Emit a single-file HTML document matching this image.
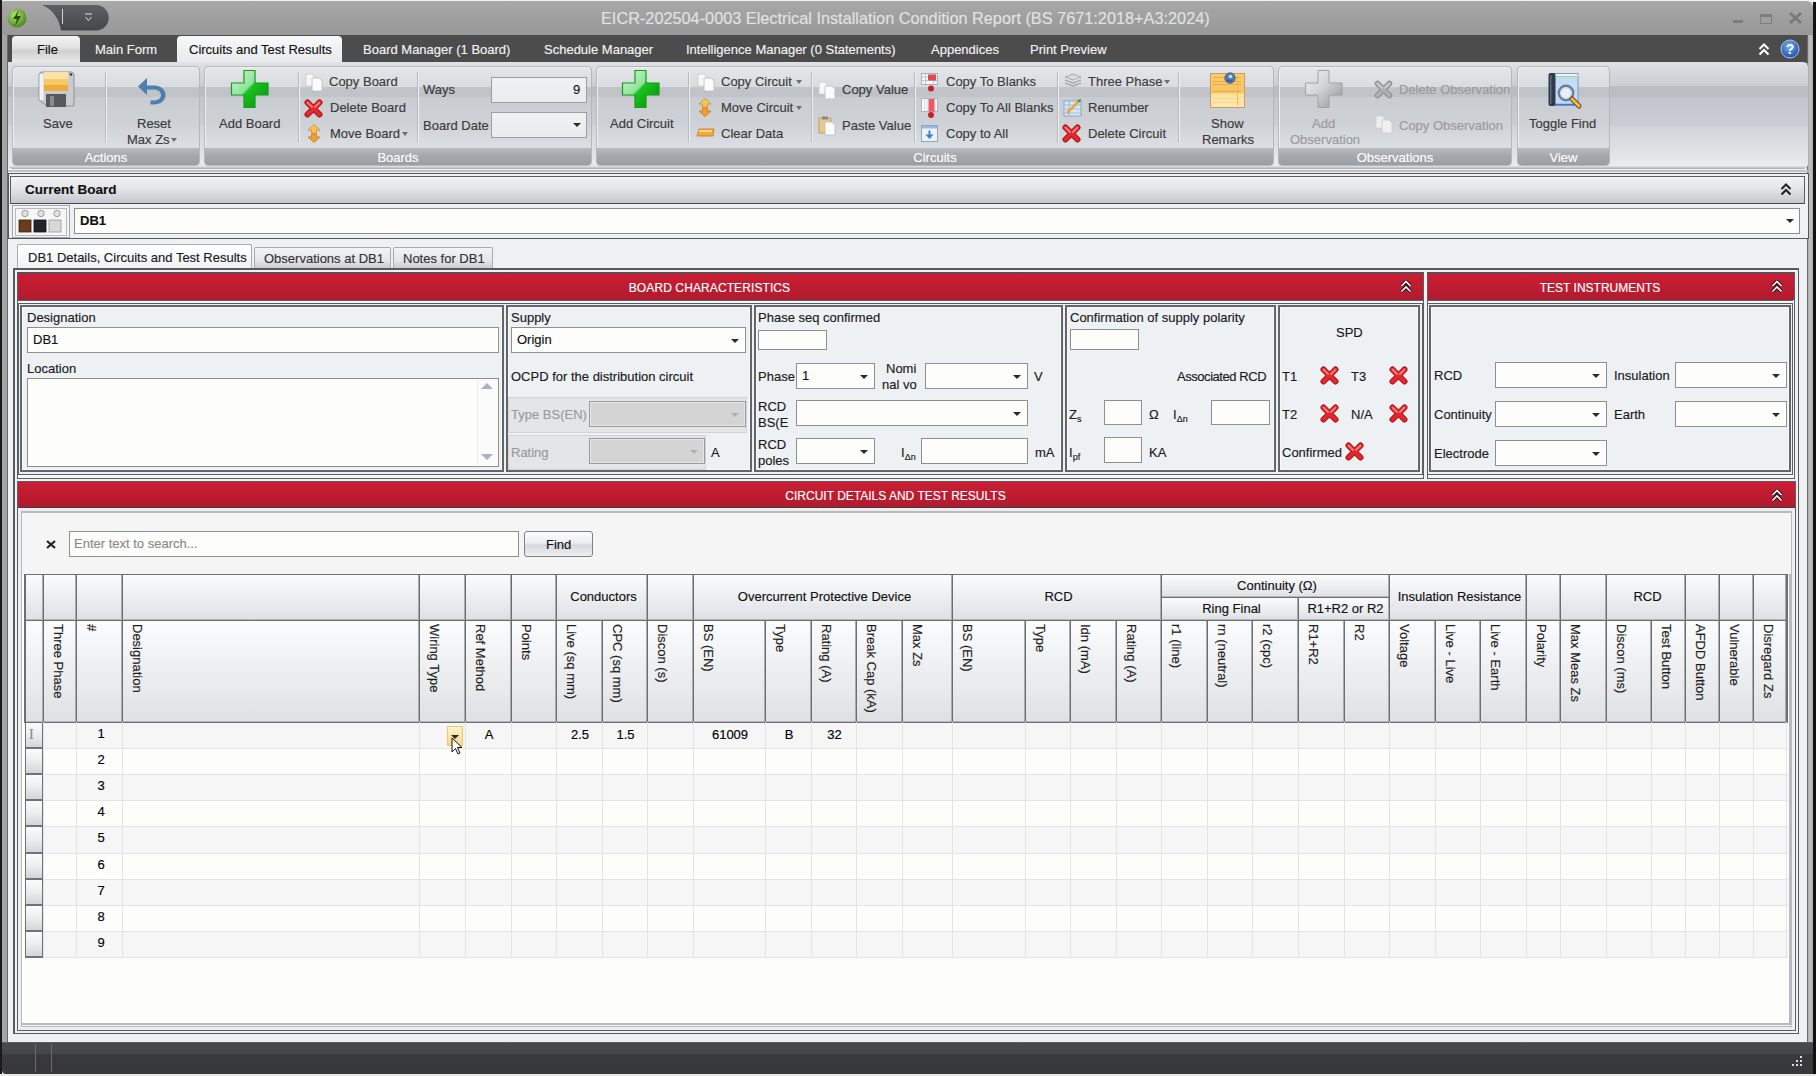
<!DOCTYPE html><html><head><meta charset="utf-8"><style>
*{box-sizing:border-box;margin:0;padding:0}
html,body{width:1816px;height:1076px;overflow:hidden;background:#f0f0f0}
body{font-family:"Liberation Sans",sans-serif;font-size:13px;color:#1e1e1e;position:relative;-webkit-text-stroke:0.15px currentColor}
.a{position:absolute}
.t{position:absolute;white-space:nowrap;line-height:15px}
.rt{color:#3a3a3a}
.glab{position:absolute;left:0;right:0;bottom:0;height:17px;background:linear-gradient(#b6b9bd,#a4a7ac 50%,#9b9ea3);color:#fff;text-align:center;line-height:19px;border-radius:0 0 3px 3px}
.grp{position:absolute;top:66px;height:100px;border:1px solid #b4b7bc;border-radius:4px;background:linear-gradient(#e4e6e9 0%,#d8dbdf 20%,#c0c3c8 21%,#bfc2c7 30%,#c9ccd1 31%,#ced1d6 58%,#dadde1 80%,#e0e3e6 100%);box-shadow:inset 1px 1px 0 #eef0f2}
.sep{position:absolute;width:2px;background:#b6b9be;border-right:1px solid #eef0f2}
.inp{position:absolute;background:#fdfdfc;border:1px solid #8e8f8f}
.dd{position:absolute;width:0;height:0;border-left:5px solid transparent;border-right:5px solid transparent;border-top:5px solid #2a2a2a}
.box{position:absolute;border:1px solid #7a7c7e;box-shadow:0 0 0 1px #eef1f4,0 0 0 2px #8e9092}
.redh{position:absolute;height:26px;background:linear-gradient(#cc1d33,#b01b2e);color:#fff;text-align:center;line-height:26px;font-size:13px;padding-right:22px;padding-top:1px}
.vh{position:absolute;writing-mode:vertical-rl;white-space:nowrap;line-height:15px;color:#1e1e1e}
.hc{position:absolute;background:linear-gradient(#fafafa 0%,#eceef0 40%,#dcdee1 100%);border-right:1px solid #7e8083;border-bottom:1px solid #7e8083}
</style></head><body><div class="a" style="left:0;top:0;width:1816px;height:1076px;background:#eef0f2"></div>
<div class="a" style="left:0;top:0;width:1816px;height:2px;background:#f2f2f2"></div>
<div class="a" style="left:0;top:1px;width:1813px;height:35px;background:linear-gradient(#a9a9a9,#9f9f9f 50%,#989898);border-radius:4px 6px 0 0"></div>
<div class="a" style="left:0;top:0;width:2px;height:1076px;background:#1a1a1a"></div>
<div class="a" style="left:1813px;top:2px;width:3px;height:1074px;background:#111"></div>
<div class="t" style="left:601px;top:9px;font-size:16.3px;line-height:18px;color:#e2e2e2;letter-spacing:0">EICR-202504-0003 Electrical Installation Condition Report (BS 7671:2018+A3:2024)</div>
<svg class="a" style="left:6px;top:7px" width="22" height="22" viewBox="0 0 22 22"><defs><radialGradient id="ga" cx="40%" cy="35%" r="65%"><stop offset="0" stop-color="#b8e07a"/><stop offset="1" stop-color="#4c8a1e"/></radialGradient></defs><circle cx="11" cy="11" r="9.5" fill="url(#ga)"/><path d="M13 3L7 12H11L9 19L15 9H11Z" fill="#1f4a10"/></svg>
<svg class="a" style="left:40px;top:4px" width="72" height="28"><defs><linearGradient id="gqa" x1="0" y1="0" x2="0" y2="1"><stop offset="0" stop-color="#5e6064"/><stop offset="1" stop-color="#44464a"/></linearGradient></defs><path d="M2 1H56A12.7 12.7 0 0 1 56 26.5H21C19 14 12 5 2 1Z" fill="url(#gqa)"/></svg>
<div class="a" style="left:62px;top:9px;width:1px;height:15px;background:#cfcfcf"></div>
<svg class="a" style="left:84px;top:13px" width="9" height="10"><path d="M1 1H8" stroke="#ddd" stroke-width="1"/><path d="M1.5 4L4.5 7.5L7.5 4" stroke="#ddd" fill="none" stroke-width="1"/></svg>
<div class="a" style="left:1733px;top:20px;width:10px;height:3px;background:#7d7d7d"></div>
<div class="a" style="left:1760px;top:14px;width:12px;height:10px;border:1px solid #7d7d7d;border-top:3px solid #7d7d7d"></div>
<svg class="a" style="left:1788px;top:11px" width="15" height="14"><path d="M2 2L13 12M13 2L2 12" stroke="#7a7a7a" stroke-width="3"/></svg>
<div class="a" style="left:2px;top:35px;width:1807px;height:28px;background:#4c4c4d"></div>
<div class="a" style="left:1807px;top:35px;width:6px;height:1008px;background:linear-gradient(90deg,#6a6a6a 0,#6a6a6a 1px,#a8a8a8 1px,#c4c4c4 50%,#a8a8a8)"></div>
<div class="a" style="left:2px;top:35px;width:6px;height:1010px;background:#a4a4a4"></div>
<div class="a" style="left:7px;top:35px;width:1px;height:1008px;background:#6a6a6a"></div>
<div class="a" style="left:12px;top:36px;width:68px;height:27px;border-radius:4px 4px 0 0;background:linear-gradient(#f4f4f4,#e0e0e0 45%,#cfcfcf 55%,#ececec)"></div>
<div class="t" style="left:37px;top:42px;color:#111">File</div>
<div class="t" style="left:95px;top:42px;color:#f2f2f2">Main Form</div>
<div class="a" style="left:177px;top:36px;width:165px;height:28px;border-radius:4px 4px 0 0;background:linear-gradient(#f7f8f9,#e6e8eb)"></div>
<div class="t" style="left:189px;top:42px;color:#111">Circuits and Test Results</div>
<div class="t" style="left:363px;top:42px;color:#f2f2f2">Board Manager (1 Board)</div>
<div class="t" style="left:544px;top:42px;color:#f2f2f2">Schedule Manager</div>
<div class="t" style="left:686px;top:42px;color:#f2f2f2">Intelligence Manager (0 Statements)</div>
<div class="t" style="left:931px;top:42px;color:#f2f2f2">Appendices</div>
<div class="t" style="left:1030px;top:42px;color:#f2f2f2">Print Preview</div>
<svg class="a" style="left:1758px;top:43px" width="12" height="13" viewBox="0 0 12 13"><path d="M1.5 6L6 1.5L10.5 6M1.5 11.5L6 7L10.5 11.5" stroke="#fff" stroke-width="2" fill="none"/></svg>
<svg class="a" style="left:1780px;top:39px" width="20" height="20" viewBox="0 0 20 20"><defs><radialGradient id="gh" cx="45%" cy="35%" r="60%"><stop offset="0" stop-color="#7fb4f0"/><stop offset="1" stop-color="#1d56b8"/></radialGradient></defs><circle cx="10" cy="10" r="9" fill="url(#gh)" stroke="#b9c6d6" stroke-width="1"/><text x="10" y="15" font-family="Liberation Sans" font-weight="bold" font-size="14" fill="#fff" text-anchor="middle">?</text></svg>
<div class="a" style="left:8px;top:62px;width:1800px;height:107px;border-radius:0 5px 5px 5px;background:linear-gradient(#e0e2e5 0%,#d9dce0 5%,#cacdd3 22%,#babdc2 23%,#b9bcc1 32%,#c2c5cb 33%,#cacdd3 58%,#d1d4d9 61%,#e9ebed 97%,#a5a7aa 100%)"></div>
<div class="a" style="left:8px;top:170px;width:1800px;height:2px;background:#bfc1c4"></div>
<div class="grp" style="left:12px;width:188px"><div class="glab">Actions</div></div>
<div class="grp" style="left:204px;width:388px"><div class="glab">Boards</div></div>
<div class="grp" style="left:596px;width:678px"><div class="glab">Circuits</div></div>
<div class="grp" style="left:1278px;width:234px"><div class="glab">Observations</div></div>
<div class="grp" style="left:1517px;width:93px"><div class="glab">View</div></div>
<svg class="a" style="left:38px;top:71px" width="37" height="37" viewBox="0 0 37 37"><path d="M3 1H34L36 3V35H9L1 29V3Z" fill="#c9cbce" stroke="#8f9195" stroke-width="1"/><rect x="1.5" y="3" width="4" height="26" fill="#f2f2f2"/><rect x="6" y="1" width="24" height="7" fill="#fbe3a3"/><rect x="6" y="8" width="24" height="6" fill="#f6c96c"/><rect x="6" y="14" width="24" height="6" fill="#efab3a"/><circle cx="33" cy="3.5" r="1.3" fill="#333"/><rect x="8" y="23" width="20" height="13" fill="#58595c"/><rect x="12" y="25" width="4" height="10" fill="#8a8b8e"/></svg>
<div class="t rt" style="left:43px;top:116px">Save</div>
<div class="sep" style="left:105px;top:72px;height:70px"></div>
<svg class="a" style="left:136px;top:76px" width="34" height="30" viewBox="0 0 34 30"><path d="M11 2L2 10.5L11 19V13.5H18C22 13.5 25 15.8 25 19C25 22.2 22 24.5 18 24.5H14.5V28.5H18C24.5 28.5 29.5 24.5 29.5 19C29.5 13.5 24.5 9.5 18 9.5H11Z" fill="#4d7fae"/></svg>
<div class="t rt" style="left:137px;top:116px">Reset</div>
<div class="t rt" style="left:127px;top:132px">Max Zs</div>
<div class="dd" style="left:171px;top:138px;border-width:4px 3px 0 3px;border-top-color:#6e6e6e"></div>
<svg class="a" style="left:230px;top:69px" width="40" height="40" viewBox="0 0 40 40"><defs><linearGradient id="gp230" x1="0" y1="0" x2="1" y2="1"><stop offset="0" stop-color="#d6f5dc"/><stop offset="0.45" stop-color="#8fe39a"/><stop offset="0.5" stop-color="#19c21f"/><stop offset="1" stop-color="#0a8c10"/></linearGradient></defs><path d="M14 1.5H25V14H38V26H25V38.5H14V26H1.5V14H14Z" fill="url(#gp230)" stroke="#10a015" stroke-width="1.2"/></svg>
<div class="t rt" style="left:219px;top:116px">Add Board</div>
<div class="sep" style="left:298px;top:72px;height:70px"></div>
<svg class="a" style="left:305px;top:73px" width="20" height="19" viewBox="0 0 20 19"><path d="M1 1H7L9 3V13H1Z" fill="#f7f7f7" stroke="#c9c9c9" stroke-width="0.8"/><path d="M7 5H14L17 8V18H7Z" fill="#fafafa" stroke="#bdbdbd" stroke-width="0.8"/></svg>
<div class="t rt" style="left:329px;top:74px">Copy Board</div>
<svg class="a" style="left:304px;top:99px" width="19" height="19" viewBox="0 0 19 19"><path d="M3.5 3.5L15.5 15.5M15.5 3.5L3.5 15.5" stroke="#a80e12" stroke-width="6" stroke-linecap="round"/><path d="M3.5 3.5L15.5 15.5M15.5 3.5L3.5 15.5" stroke="#e5262c" stroke-width="4" stroke-linecap="round"/><path d="M3.5 3.5L8 8M15.5 3.5L11 8" stroke="#f47a7d" stroke-width="2" stroke-linecap="round"/></svg>
<div class="t rt" style="left:330px;top:100px">Delete Board</div>
<svg class="a" style="left:306px;top:124px" width="16" height="19" viewBox="0 0 16 19"><path d="M8 0.5L14 6H10.5V9H5.5V6H2Z" fill="#f7c35a" stroke="#d98e1c" stroke-width="0.8"/><path d="M8 18.5L14 13H10.5V10H5.5V13H2Z" fill="#f0a030" stroke="#d07a10" stroke-width="0.8"/></svg>
<div class="t rt" style="left:330px;top:126px">Move Board</div>
<div class="dd" style="left:402px;top:132px;border-width:4px 3px 0 3px;border-top-color:#6e6e6e"></div>
<div class="sep" style="left:417px;top:72px;height:70px"></div>
<div class="t rt" style="left:423px;top:82px">Ways</div>
<div class="inp" style="left:491px;top:77px;width:96px;height:26px;background:linear-gradient(#f0f1f3,#e9ebee);border-color:#9c9ea1"></div>
<div class="t" style="left:573px;top:82px;color:#111">9</div>
<div class="t rt" style="left:423px;top:118px">Board Date</div>
<div class="inp" style="left:491px;top:112px;width:96px;height:26px;background:linear-gradient(#f0f1f3,#e9ebee);border-color:#9c9ea1"></div>
<div class="dd" style="left:573px;top:123px;border-width:4px 4px 0 4px"></div>
<svg class="a" style="left:621px;top:69px" width="40" height="40" viewBox="0 0 40 40"><defs><linearGradient id="gp621" x1="0" y1="0" x2="1" y2="1"><stop offset="0" stop-color="#d6f5dc"/><stop offset="0.45" stop-color="#8fe39a"/><stop offset="0.5" stop-color="#19c21f"/><stop offset="1" stop-color="#0a8c10"/></linearGradient></defs><path d="M14 1.5H25V14H38V26H25V38.5H14V26H1.5V14H14Z" fill="url(#gp621)" stroke="#10a015" stroke-width="1.2"/></svg>
<div class="t rt" style="left:610px;top:116px">Add Circuit</div>
<div class="sep" style="left:688px;top:72px;height:70px"></div>
<svg class="a" style="left:697px;top:73px" width="20" height="19" viewBox="0 0 20 19"><path d="M1 1H7L9 3V13H1Z" fill="#f7f7f7" stroke="#c9c9c9" stroke-width="0.8"/><path d="M7 5H14L17 8V18H7Z" fill="#fafafa" stroke="#bdbdbd" stroke-width="0.8"/></svg>
<div class="t rt" style="left:721px;top:74px">Copy Circuit</div>
<div class="dd" style="left:796px;top:80px;border-width:4px 3px 0 3px;border-top-color:#6e6e6e"></div>
<svg class="a" style="left:697px;top:98px" width="16" height="19" viewBox="0 0 16 19"><path d="M8 0.5L14 6H10.5V9H5.5V6H2Z" fill="#f7c35a" stroke="#d98e1c" stroke-width="0.8"/><path d="M8 18.5L14 13H10.5V10H5.5V13H2Z" fill="#f0a030" stroke="#d07a10" stroke-width="0.8"/></svg>
<div class="t rt" style="left:721px;top:100px">Move Circuit</div>
<div class="dd" style="left:796px;top:106px;border-width:4px 3px 0 3px;border-top-color:#6e6e6e"></div>
<svg class="a" style="left:696px;top:128px" width="20" height="10" viewBox="0 0 20 10"><path d="M3 1H18L17 8H1Z" fill="#f2a83a" stroke="#c97a12" stroke-width="0.8"/><rect x="3" y="2" width="13" height="2" fill="#fbd58a"/></svg>
<div class="t rt" style="left:721px;top:126px">Clear Data</div>
<div class="sep" style="left:811px;top:72px;height:70px"></div>
<svg class="a" style="left:818px;top:81px" width="20" height="19" viewBox="0 0 20 19"><path d="M1 1H7L9 3V13H1Z" fill="#f7f7f7" stroke="#c9c9c9" stroke-width="0.8"/><path d="M7 5H14L17 8V18H7Z" fill="#fafafa" stroke="#bdbdbd" stroke-width="0.8"/></svg>
<div class="t rt" style="left:842px;top:82px">Copy Value</div>
<svg class="a" style="left:818px;top:116px" width="20" height="20" viewBox="0 0 20 20"><rect x="1" y="2" width="12" height="15" fill="#e8c98a" stroke="#b8955a" stroke-width="0.8"/><rect x="4" y="0.5" width="6" height="3" fill="#8a8a8a"/><path d="M7 6H14L17 9V19H7Z" fill="#fafafa" stroke="#bdbdbd" stroke-width="0.8"/></svg>
<div class="t rt" style="left:842px;top:118px">Paste Value</div>
<div class="sep" style="left:914px;top:72px;height:70px"></div>
<svg class="a" style="left:920px;top:72px" width="20" height="22" viewBox="0 0 20 22"><rect x="1.5" y="1.5" width="16" height="11" fill="#f4f7fb" stroke="#9fb0c4" stroke-width="1"/><path d="M1.5 5H17.5M1.5 8.5H17.5M5.5 1.5V12.5M13.5 1.5V12.5" stroke="#b8c6d8" stroke-width="1"/><rect x="8" y="2.5" width="8" height="6" fill="#e0474c"/><circle cx="11" cy="16.5" r="3" fill="#c8202a"/></svg>
<div class="t rt" style="left:946px;top:74px">Copy To Blanks</div>
<svg class="a" style="left:920px;top:98px" width="20" height="22" viewBox="0 0 20 22"><rect x="1.5" y="0.5" width="16" height="13" fill="#fbfbfb" stroke="#a8b4c4" stroke-width="1"/><path d="M4.5 1V13M7 1V13M15 1V13" stroke="#d6dbe2" stroke-width="1"/><rect x="8.5" y="1" width="6" height="12.5" fill="#ec5a60"/><circle cx="11" cy="17" r="3" fill="#c8202a"/></svg>
<div class="t rt" style="left:946px;top:100px">Copy To All Blanks</div>
<svg class="a" style="left:920px;top:124px" width="20" height="20" viewBox="0 0 20 20"><rect x="1.5" y="1.5" width="16" height="16" fill="#eef3fa" stroke="#8ea6c4" stroke-width="1"/><rect x="2" y="2" width="15" height="2.5" fill="#9fb8d8"/><path d="M9.5 6.5V12" stroke="#3c7ed0" stroke-width="2"/><path d="M5.5 10.5L9.5 15L13.5 10.5Z" fill="#3c7ed0"/></svg>
<div class="t rt" style="left:946px;top:126px">Copy to All</div>
<div class="sep" style="left:1057px;top:72px;height:70px"></div>
<svg class="a" style="left:1063px;top:73px" width="20" height="16" viewBox="0 0 20 16"><path d="M10 1L18 4L10 7L2 4Z" fill="#d9dadc" stroke="#9c9ea1" stroke-width="0.8"/><path d="M2 7L10 10L18 7" fill="none" stroke="#9c9ea1" stroke-width="1.2"/><path d="M2 10L10 13L18 10" fill="none" stroke="#9c9ea1" stroke-width="1.2"/></svg>
<div class="t rt" style="left:1088px;top:74px">Three Phase</div>
<div class="dd" style="left:1164px;top:80px;border-width:4px 3px 0 3px;border-top-color:#6e6e6e"></div>
<svg class="a" style="left:1063px;top:98px" width="20" height="19" viewBox="0 0 20 19"><rect x="1" y="3" width="17" height="15" fill="#d8e8f7" stroke="#7d9cc0" stroke-width="0.8"/><path d="M1 7H18M1 11H18M1 15H18M6 3V18" stroke="#8fb0d4" stroke-width="0.8"/><path d="M4 15L16 3" stroke="#f2a43a" stroke-width="2.5"/><path d="M14 2L18 1L17 5Z" fill="#3aa03a"/></svg>
<div class="t rt" style="left:1088px;top:100px">Renumber</div>
<svg class="a" style="left:1062px;top:124px" width="19" height="19" viewBox="0 0 19 19"><path d="M3.5 3.5L15.5 15.5M15.5 3.5L3.5 15.5" stroke="#a80e12" stroke-width="6" stroke-linecap="round"/><path d="M3.5 3.5L15.5 15.5M15.5 3.5L3.5 15.5" stroke="#e5262c" stroke-width="4" stroke-linecap="round"/><path d="M3.5 3.5L8 8M15.5 3.5L11 8" stroke="#f47a7d" stroke-width="2" stroke-linecap="round"/></svg>
<div class="t rt" style="left:1088px;top:126px">Delete Circuit</div>
<div class="sep" style="left:1178px;top:72px;height:70px"></div>
<svg class="a" style="left:1209px;top:69px" width="40" height="40" viewBox="0 0 40 40"><defs><linearGradient id="grm" x1="0" y1="0" x2="0" y2="1"><stop offset="0" stop-color="#f7cf72"/><stop offset="0.55" stop-color="#f4c463"/><stop offset="0.62" stop-color="#fbe2a0"/><stop offset="1" stop-color="#fde9b4"/></linearGradient></defs><rect x="1.5" y="4.5" width="34" height="34" fill="url(#grm)" stroke="#d09868" stroke-width="1"/><path d="M4 8.5H32M4 12.5H32M4 15.5H32M4 22.5H32" stroke="#eeaa40" stroke-width="1"/><path d="M4 29.5H32M4 33.5H32" stroke="#f6d88a" stroke-width="1"/><path d="M28.5 6V37" stroke="#e8b060" stroke-width="0.8"/><circle cx="21" cy="9" r="5.2" fill="#5a7aa8" stroke="#3a557e" stroke-width="0.8"/><circle cx="21.5" cy="7.5" r="1.8" fill="#bfe0d0"/><path d="M18 11L23 12" stroke="#2a5ad0" stroke-width="1.5"/></svg>
<div class="t rt" style="left:1211px;top:116px">Show</div>
<div class="t rt" style="left:1202px;top:132px">Remarks</div>
<svg class="a" style="left:1304px;top:69px" width="40" height="40" viewBox="0 0 40 40"><defs><linearGradient id="gq" x1="0" y1="0" x2="1" y2="1"><stop offset="0" stop-color="#eef0f1"/><stop offset="0.45" stop-color="#d2d4d6"/><stop offset="1" stop-color="#8e9093"/></linearGradient></defs><path d="M14 1.5H25V14H38V26H25V38.5H14V26H1.5V14H14Z" fill="url(#gq)" stroke="#a0a2a5" stroke-width="1"/></svg>
<div class="t" style="left:1312px;top:116px;color:#9a9a9a">Add</div>
<div class="t" style="left:1290px;top:132px;color:#9a9a9a">Observation</div>
<svg class="a" style="left:1374px;top:80px" width="19" height="19" viewBox="0 0 19 19"><path d="M3.5 3.5L15.5 15.5M15.5 3.5L3.5 15.5" stroke="#8c8e91" stroke-width="5.5" stroke-linecap="round"/><path d="M3.5 3.5L15.5 15.5M15.5 3.5L3.5 15.5" stroke="#aeb0b3" stroke-width="3.5" stroke-linecap="round"/><path d="M3.5 3.5L8 8M15.5 3.5L11 8" stroke="#cfd1d4" stroke-width="1.5" stroke-linecap="round"/></svg>
<div class="t" style="left:1399px;top:82px;color:#9a9a9a">Delete Observation</div>
<svg class="a" style="left:1375px;top:115px" width="20" height="19" viewBox="0 0 20 19"><path d="M1 1H7L9 3V13H1Z" fill="#eeeeee" stroke="#d0d0d0" stroke-width="0.8"/><path d="M7 5H14L17 8V18H7Z" fill="#f0f0f0" stroke="#cccccc" stroke-width="0.8"/></svg>
<div class="t" style="left:1399px;top:118px;color:#9a9a9a">Copy Observation</div>
<svg class="a" style="left:1546px;top:71px" width="38" height="40" viewBox="0 0 38 40"><rect x="8.5" y="2.5" width="23.5" height="32" fill="#c6daf1" stroke="#7e9cc4" stroke-width="1"/><rect x="9" y="3" width="22.5" height="3" fill="#eef3f9"/><path d="M10 5.5H31" stroke="#8fdc9a" stroke-width="1"/><path d="M9 33.5H31" stroke="#3a7ae0" stroke-width="1.5"/><rect x="2.5" y="2" width="7" height="33" rx="2" fill="#2f3a4c"/><rect x="4" y="4" width="1.5" height="29" fill="#5a6a80"/><circle cx="20" cy="22" r="7.2" fill="#e9eff7" stroke="#66809f" stroke-width="2.4"/><circle cx="20" cy="22" r="5.2" fill="none" stroke="#c8d6e6" stroke-width="1"/><path d="M26 28L33 35" stroke="#6a4a20" stroke-width="5" stroke-linecap="round"/><path d="M26 28L33 35" stroke="#f0b84a" stroke-width="3" stroke-linecap="round"/></svg>
<div class="t rt" style="left:1529px;top:116px">Toggle Find</div>
<div class="a" style="left:8px;top:173px;width:1801px;height:66px;border:1px solid #55595d;background:#eef0f3"></div>
<div class="a" style="left:10px;top:176px;width:1795px;height:28px;border:1px solid #5a5e62;border-bottom-color:#454749;background:linear-gradient(#f1f3f5,#e5e6e8 40%,#cfd3d8 80%,#c4c7cc)"></div>
<div class="t" style="left:25px;top:182px;font-weight:bold;font-size:13.5px;color:#111">Current Board</div>
<svg class="a" style="left:1780px;top:183px" width="12" height="13" viewBox="0 0 12 13"><path d="M1.5 6L6 1.5L10.5 6M1.5 11.5L6 7L10.5 11.5" stroke="#222" stroke-width="2" fill="none"/></svg>
<div class="a" style="left:12px;top:205px;width:58px;height:33px;border:1px solid #a2a4a7;background:#f4f5f6"></div>
<svg class="a" style="left:15px;top:208px" width="52" height="28" viewBox="0 0 52 28"><rect x="0.5" y="0.5" width="51" height="27" fill="#f6f6f6" stroke="#b8b8b8"/><circle cx="10" cy="5.5" r="3.2" fill="#e2e2e2" stroke="#8a8a8a" stroke-width="0.8"/><circle cx="26" cy="5.5" r="3.2" fill="#e2e2e2" stroke="#8a8a8a" stroke-width="0.8"/><circle cx="42" cy="5.5" r="3.2" fill="#e2e2e2" stroke="#8a8a8a" stroke-width="0.8"/><rect x="4" y="12" width="12" height="12" fill="#6b3b1c" stroke="#3a2010" stroke-width="0.8"/><rect x="19" y="12" width="12" height="12" fill="#23242a" stroke="#111" stroke-width="0.8"/><rect x="34" y="12" width="12" height="12" fill="#d8d8d8" stroke="#999" stroke-width="0.8"/></svg>
<div class="inp" style="left:74px;top:208px;width:1726px;height:26px;border-color:#8c8e90"></div>
<div class="t" style="left:80px;top:213px;font-weight:bold;color:#111">DB1</div>
<div class="dd" style="left:1786px;top:219px;border-width:4px 4px 0 4px"></div>
<div class="a" style="left:17px;top:244px;width:235px;height:25px;border:1px solid #a9abae;border-bottom:none;background:linear-gradient(#ffffff,#eef0f2);border-radius:2px 2px 0 0"></div>
<div class="t" style="left:28px;top:250px;color:#1a1a1a">DB1 Details, Circuits and Test Results</div>
<div class="a" style="left:254px;top:247px;width:137px;height:21px;border:1px solid #a9abae;border-bottom:none;background:linear-gradient(#f3f4f6,#e4e6e9 60%,#c9ccd0);border-radius:2px 2px 0 0"></div>
<div class="t" style="left:264px;top:251px;color:#333">Observations at DB1</div>
<div class="a" style="left:393px;top:247px;width:100px;height:21px;border:1px solid #a9abae;border-bottom:none;background:linear-gradient(#f3f4f6,#e4e6e9 60%,#c9ccd0);border-radius:2px 2px 0 0"></div>
<div class="t" style="left:403px;top:251px;color:#333">Notes for DB1</div>
<div class="a" style="left:13px;top:268px;width:1786px;height:766px;border:2px solid #565a5e;border-right-width:1px;border-bottom-width:1px;background:#eef0f2"></div>
<div class="a" style="left:17px;top:272px;width:1407px;height:207px;border:1px solid #5a5e62;border-top:2px solid #5e4a50;background:#f4f6f8"></div>
<div class="redh" style="left:18px;top:274px;width:1405px;height:26px;line-height:26px;font-size:12px;letter-spacing:0.1px">BOARD CHARACTERISTICS</div>
<svg class="a" style="left:1400px;top:280px" width="12" height="13" viewBox="0 0 12 13"><path d="M1.5 6L6 1.5L10.5 6M1.5 11.5L6 7L10.5 11.5" stroke="#2a0a10" stroke-width="3.4" fill="none"/><path d="M1.5 6L6 1.5L10.5 6M1.5 11.5L6 7L10.5 11.5" stroke="#fff" stroke-width="1.6" fill="none"/></svg>
<div class="a" style="left:18px;top:300px;width:1405px;height:1px;background:#5a5e62"></div>
<div class="a" style="left:18px;top:303px;width:1405px;height:172px;border:1px solid #5a5e62;background:#eef1f4"></div>
<div class="a" style="left:1427px;top:272px;width:368px;height:207px;border:1px solid #5a5e62;border-top:2px solid #5e4a50;background:#f4f6f8"></div>
<div class="redh" style="left:1428px;top:274px;width:366px;height:26px;line-height:26px;font-size:12px">TEST INSTRUMENTS</div>
<svg class="a" style="left:1771px;top:280px" width="12" height="13" viewBox="0 0 12 13"><path d="M1.5 6L6 1.5L10.5 6M1.5 11.5L6 7L10.5 11.5" stroke="#2a0a10" stroke-width="3.4" fill="none"/><path d="M1.5 6L6 1.5L10.5 6M1.5 11.5L6 7L10.5 11.5" stroke="#fff" stroke-width="1.6" fill="none"/></svg>
<div class="a" style="left:1427px;top:300px;width:366px;height:1px;background:#5a5e62"></div>
<div class="a" style="left:1427px;top:303px;width:366px;height:172px;border:1px solid #5a5e62;background:#eef1f4"></div>
<div class="a" style="left:20px;top:305px;width:484px;height:167px;border:2px solid #62666a;background:#eef1f4;box-shadow:inset 0 0 0 1px #f8f9fa"></div>
<div class="a" style="left:506px;top:305px;width:246px;height:167px;border:2px solid #62666a;background:#eef1f4;box-shadow:inset 0 0 0 1px #f8f9fa"></div>
<div class="a" style="left:754px;top:305px;width:309px;height:167px;border:2px solid #62666a;background:#eef1f4;box-shadow:inset 0 0 0 1px #f8f9fa"></div>
<div class="a" style="left:1065px;top:305px;width:211px;height:167px;border:2px solid #62666a;background:#eef1f4;box-shadow:inset 0 0 0 1px #f8f9fa"></div>
<div class="a" style="left:1278px;top:305px;width:142px;height:167px;border:2px solid #62666a;background:#eef1f4;box-shadow:inset 0 0 0 1px #f8f9fa"></div>
<div class="a" style="left:1429px;top:305px;width:362px;height:167px;border:2px solid #62666a;background:#eef1f4;box-shadow:inset 0 0 0 1px #f8f9fa"></div>
<div class="t" style="left:27px;top:310px;color:#1a1a1a;">Designation</div>
<div class="inp" style="left:27px;top:327px;width:472px;height:26px;background:#fdfdfc;border-color:#8e8f8f;box-shadow:inset 0 0 0 1px #fdfdfc"></div>
<div class="t" style="left:33px;top:332px;color:#111;">DB1</div>
<div class="t" style="left:27px;top:361px;color:#1a1a1a;">Location</div>
<div class="inp" style="left:27px;top:378px;width:472px;height:89px;border-color:#8e8f8f"></div>
<div class="a" style="left:477px;top:380px;width:20px;height:85px;background:#fbfbfb;border-left:1px solid #eeeeee"></div>
<svg class="a" style="left:480px;top:381px" width="14" height="10" viewBox="0 0 14 10"><path d="M1 8L7 2L13 8Z" fill="#a6b3c4"/></svg>
<svg class="a" style="left:480px;top:452px" width="14" height="10" viewBox="0 0 14 10"><path d="M1 2L7 8L13 2Z" fill="#a6b3c4"/></svg>
<div class="t" style="left:511px;top:310px;color:#1a1a1a;">Supply</div>
<div class="inp" style="left:511px;top:327px;width:235px;height:26px;background:#fdfdfc;border-color:#8e8f8f;box-shadow:inset 0 0 0 1px #fdfdfc"></div>
<div class="t" style="left:517px;top:332px;color:#111;">Origin</div>
<div class="dd" style="left:731px;top:339px;border-width:4px 4px 0 4px;border-top-color:#2a2a2a"></div>
<div class="t" style="left:511px;top:369px;color:#1a1a1a;">OCPD for the distribution circuit</div>
<div class="a" style="left:508px;top:397px;width:239px;height:36px;background:#e3e5e7;border:1px solid #d2d4d6"></div>
<div class="t" style="left:511px;top:407px;color:#9a9a9a;">Type BS(EN)</div>
<div class="inp" style="left:589px;top:401px;width:157px;height:26px;background:#d4d4d4;border-color:#9a9a9a;box-shadow:inset 0 0 0 1px #e6e6e6"></div>
<div class="dd" style="left:731px;top:413px;border-width:4px 4px 0 4px;border-top-color:#b0b0b0"></div>
<div class="a" style="left:508px;top:435px;width:198px;height:35px;background:#e3e5e7;border:1px solid #d2d4d6"></div>
<div class="t" style="left:511px;top:445px;color:#9a9a9a;">Rating</div>
<div class="inp" style="left:589px;top:438px;width:116px;height:26px;background:#d4d4d4;border-color:#9a9a9a;box-shadow:inset 0 0 0 1px #e6e6e6"></div>
<div class="dd" style="left:690px;top:450px;border-width:4px 4px 0 4px;border-top-color:#b0b0b0"></div>
<div class="t" style="left:711px;top:445px;color:#1a1a1a;">A</div>
<div class="t" style="left:758px;top:310px;color:#1a1a1a;">Phase seq confirmed</div>
<div class="inp" style="left:758px;top:330px;width:69px;height:20px;border-color:#8e8f8f"></div>
<div class="t" style="left:758px;top:369px;color:#1a1a1a;">Phase</div>
<div class="inp" style="left:796px;top:363px;width:79px;height:26px;background:#fdfdfc;border-color:#8e8f8f;box-shadow:inset 0 0 0 1px #fdfdfc"></div>
<div class="t" style="left:802px;top:368px;color:#111;">1</div>
<div class="dd" style="left:860px;top:375px;border-width:4px 4px 0 4px;border-top-color:#2a2a2a"></div>
<div class="t" style="left:886px;top:361px;color:#1a1a1a;">Nomi</div>
<div class="t" style="left:882px;top:377px;color:#1a1a1a;">nal vo</div>
<div class="inp" style="left:925px;top:363px;width:103px;height:26px;background:#fdfdfc;border-color:#8e8f8f;box-shadow:inset 0 0 0 1px #fdfdfc"></div>
<div class="dd" style="left:1013px;top:375px;border-width:4px 4px 0 4px;border-top-color:#2a2a2a"></div>
<div class="t" style="left:1034px;top:369px;color:#1a1a1a;">V</div>
<div class="t" style="left:758px;top:399px;color:#1a1a1a;">RCD</div>
<div class="t" style="left:758px;top:415px;color:#1a1a1a;">BS(E</div>
<div class="inp" style="left:796px;top:400px;width:232px;height:26px;background:#fdfdfc;border-color:#8e8f8f;box-shadow:inset 0 0 0 1px #fdfdfc"></div>
<div class="dd" style="left:1013px;top:412px;border-width:4px 4px 0 4px;border-top-color:#2a2a2a"></div>
<div class="t" style="left:758px;top:437px;color:#1a1a1a;">RCD</div>
<div class="t" style="left:758px;top:453px;color:#1a1a1a;">poles</div>
<div class="inp" style="left:796px;top:438px;width:79px;height:26px;background:#fdfdfc;border-color:#8e8f8f;box-shadow:inset 0 0 0 1px #fdfdfc"></div>
<div class="dd" style="left:860px;top:450px;border-width:4px 4px 0 4px;border-top-color:#2a2a2a"></div>
<div class="t" style="left:901px;top:445px;color:#1a1a1a">I<span style="font-size:9px;position:relative;top:3px">&#916;n</span></div>
<div class="inp" style="left:921px;top:438px;width:107px;height:26px;border-color:#8e8f8f"></div>
<div class="t" style="left:1035px;top:445px;color:#1a1a1a;">mA</div>
<div class="t" style="left:1070px;top:310px;color:#1a1a1a;">Confirmation of supply polarity</div>
<div class="inp" style="left:1070px;top:329px;width:69px;height:21px;border-color:#8e8f8f"></div>
<div class="t" style="left:1177px;top:369px;color:#1a1a1a;letter-spacing:-0.45px">Associated RCD</div>
<div class="t" style="left:1069px;top:407px;color:#1a1a1a">Z<span style="font-size:9px;position:relative;top:3px">s</span></div>
<div class="inp" style="left:1104px;top:400px;width:38px;height:25px;border-color:#8e8f8f"></div>
<div class="t" style="left:1149px;top:407px;color:#1a1a1a;">&#937;</div>
<div class="t" style="left:1173px;top:407px;color:#1a1a1a">I<span style="font-size:9px;position:relative;top:3px">&#916;n</span></div>
<div class="inp" style="left:1211px;top:400px;width:59px;height:25px;border-color:#8e8f8f"></div>
<div class="t" style="left:1069px;top:445px;color:#1a1a1a">I<span style="font-size:9px;position:relative;top:3px">pf</span></div>
<div class="inp" style="left:1104px;top:437px;width:38px;height:26px;border-color:#8e8f8f"></div>
<div class="t" style="left:1149px;top:445px;color:#1a1a1a;">KA</div>
<div class="t" style="left:1336px;top:325px;color:#1a1a1a;">SPD</div>
<div class="t" style="left:1282px;top:369px;color:#1a1a1a;">T1</div>
<svg class="a" style="left:1320px;top:366px" width="19" height="19" viewBox="0 0 19 19"><path d="M3.5 3.5L15.5 15.5M15.5 3.5L3.5 15.5" stroke="#a80e12" stroke-width="6" stroke-linecap="round"/><path d="M3.5 3.5L15.5 15.5M15.5 3.5L3.5 15.5" stroke="#e5262c" stroke-width="4" stroke-linecap="round"/><path d="M3.5 3.5L8 8M15.5 3.5L11 8" stroke="#f47a7d" stroke-width="2" stroke-linecap="round"/></svg>
<div class="t" style="left:1351px;top:369px;color:#1a1a1a;">T3</div>
<svg class="a" style="left:1389px;top:366px" width="19" height="19" viewBox="0 0 19 19"><path d="M3.5 3.5L15.5 15.5M15.5 3.5L3.5 15.5" stroke="#a80e12" stroke-width="6" stroke-linecap="round"/><path d="M3.5 3.5L15.5 15.5M15.5 3.5L3.5 15.5" stroke="#e5262c" stroke-width="4" stroke-linecap="round"/><path d="M3.5 3.5L8 8M15.5 3.5L11 8" stroke="#f47a7d" stroke-width="2" stroke-linecap="round"/></svg>
<div class="t" style="left:1282px;top:407px;color:#1a1a1a;">T2</div>
<svg class="a" style="left:1320px;top:404px" width="19" height="19" viewBox="0 0 19 19"><path d="M3.5 3.5L15.5 15.5M15.5 3.5L3.5 15.5" stroke="#a80e12" stroke-width="6" stroke-linecap="round"/><path d="M3.5 3.5L15.5 15.5M15.5 3.5L3.5 15.5" stroke="#e5262c" stroke-width="4" stroke-linecap="round"/><path d="M3.5 3.5L8 8M15.5 3.5L11 8" stroke="#f47a7d" stroke-width="2" stroke-linecap="round"/></svg>
<div class="t" style="left:1351px;top:407px;color:#1a1a1a;">N/A</div>
<svg class="a" style="left:1389px;top:404px" width="19" height="19" viewBox="0 0 19 19"><path d="M3.5 3.5L15.5 15.5M15.5 3.5L3.5 15.5" stroke="#a80e12" stroke-width="6" stroke-linecap="round"/><path d="M3.5 3.5L15.5 15.5M15.5 3.5L3.5 15.5" stroke="#e5262c" stroke-width="4" stroke-linecap="round"/><path d="M3.5 3.5L8 8M15.5 3.5L11 8" stroke="#f47a7d" stroke-width="2" stroke-linecap="round"/></svg>
<div class="t" style="left:1282px;top:445px;color:#1a1a1a;">Confirmed</div>
<svg class="a" style="left:1345px;top:442px" width="19" height="19" viewBox="0 0 19 19"><path d="M3.5 3.5L15.5 15.5M15.5 3.5L3.5 15.5" stroke="#a80e12" stroke-width="6" stroke-linecap="round"/><path d="M3.5 3.5L15.5 15.5M15.5 3.5L3.5 15.5" stroke="#e5262c" stroke-width="4" stroke-linecap="round"/><path d="M3.5 3.5L8 8M15.5 3.5L11 8" stroke="#f47a7d" stroke-width="2" stroke-linecap="round"/></svg>
<div class="t" style="left:1434px;top:368px;color:#1a1a1a;">RCD</div>
<div class="inp" style="left:1495px;top:362px;width:112px;height:26px;background:#fdfdfc;border-color:#8e8f8f;box-shadow:inset 0 0 0 1px #fdfdfc"></div>
<div class="dd" style="left:1592px;top:374px;border-width:4px 4px 0 4px;border-top-color:#2a2a2a"></div>
<div class="t" style="left:1614px;top:368px;color:#1a1a1a;">Insulation</div>
<div class="inp" style="left:1675px;top:362px;width:112px;height:26px;background:#fdfdfc;border-color:#8e8f8f;box-shadow:inset 0 0 0 1px #fdfdfc"></div>
<div class="dd" style="left:1772px;top:374px;border-width:4px 4px 0 4px;border-top-color:#2a2a2a"></div>
<div class="t" style="left:1434px;top:407px;color:#1a1a1a;">Continuity</div>
<div class="inp" style="left:1495px;top:401px;width:112px;height:26px;background:#fdfdfc;border-color:#8e8f8f;box-shadow:inset 0 0 0 1px #fdfdfc"></div>
<div class="dd" style="left:1592px;top:413px;border-width:4px 4px 0 4px;border-top-color:#2a2a2a"></div>
<div class="t" style="left:1614px;top:407px;color:#1a1a1a;">Earth</div>
<div class="inp" style="left:1675px;top:401px;width:112px;height:26px;background:#fdfdfc;border-color:#8e8f8f;box-shadow:inset 0 0 0 1px #fdfdfc"></div>
<div class="dd" style="left:1772px;top:413px;border-width:4px 4px 0 4px;border-top-color:#2a2a2a"></div>
<div class="t" style="left:1434px;top:446px;color:#1a1a1a;">Electrode</div>
<div class="inp" style="left:1495px;top:440px;width:112px;height:26px;background:#fdfdfc;border-color:#8e8f8f;box-shadow:inset 0 0 0 1px #fdfdfc"></div>
<div class="dd" style="left:1592px;top:452px;border-width:4px 4px 0 4px;border-top-color:#2a2a2a"></div>
<div class="a" style="left:17px;top:481px;width:1779px;height:550px;border:1px solid #5a5e62;background:#eef0f3"></div>
<div class="redh" style="left:18px;top:482px;width:1777px;height:26px;line-height:26px;font-size:12px;border-bottom:1px solid #4a3a40">CIRCUIT DETAILS AND TEST RESULTS</div>
<svg class="a" style="left:1771px;top:489px" width="12" height="13" viewBox="0 0 12 13"><path d="M1.5 6L6 1.5L10.5 6M1.5 11.5L6 7L10.5 11.5" stroke="#2a0a10" stroke-width="3.4" fill="none"/><path d="M1.5 6L6 1.5L10.5 6M1.5 11.5L6 7L10.5 11.5" stroke="#fff" stroke-width="1.6" fill="none"/></svg>
<div class="a" style="left:18px;top:509px;width:1777px;height:521px;background:#eceef0"></div>
<div class="a" style="left:21px;top:511px;width:1771px;height:516px;border:1px solid #b8babd;border-top:2px solid #b8babd;background:#f5f5f5"></div>
<div class="a" style="left:22px;top:574px;width:1769px;height:451px;background:#fdfdfc;border-right:2px solid #b8babd;border-bottom:2px solid #b8babd"></div>
<svg class="a" style="left:46px;top:540px" width="10" height="9" viewBox="0 0 10 9"><path d="M1 1L9 8M9 1L1 8" stroke="#222" stroke-width="2.2"/></svg>
<div class="inp" style="left:69px;top:531px;width:450px;height:26px;border-color:#8e8f8f"></div>
<div class="t" style="left:74px;top:536px;color:#8a8a8a;">Enter text to search...</div>
<div class="a" style="left:524px;top:531px;width:69px;height:26px;border:1px solid #808285;border-radius:3px;background:linear-gradient(#fdfdfd,#eceef0 45%,#d6d9dc 55%,#eef0f2)"></div>
<div class="t" style="left:546px;top:537px;color:#111;">Find</div>
<div class="a" style="left:24px;top:574px;width:1764px;height:149px;background:#6c6e71"></div>
<div class="a" style="left:26px;top:575px;width:17px;height:45px;background:linear-gradient(#fbfcfc 0%,#f1f2f4 35%,#dee1e4 100%);box-shadow:inset -1px 0 0 #a9abae,inset 0 -1px 0 #b4b6b9"></div>
<div class="a" style="left:44px;top:575px;width:32px;height:45px;background:linear-gradient(#fbfcfc 0%,#f1f2f4 35%,#dee1e4 100%);box-shadow:inset -1px 0 0 #a9abae,inset 0 -1px 0 #b4b6b9"></div>
<div class="a" style="left:77px;top:575px;width:45px;height:45px;background:linear-gradient(#fbfcfc 0%,#f1f2f4 35%,#dee1e4 100%);box-shadow:inset -1px 0 0 #a9abae,inset 0 -1px 0 #b4b6b9"></div>
<div class="a" style="left:123px;top:575px;width:296px;height:45px;background:linear-gradient(#fbfcfc 0%,#f1f2f4 35%,#dee1e4 100%);box-shadow:inset -1px 0 0 #a9abae,inset 0 -1px 0 #b4b6b9"></div>
<div class="a" style="left:420px;top:575px;width:45px;height:45px;background:linear-gradient(#fbfcfc 0%,#f1f2f4 35%,#dee1e4 100%);box-shadow:inset -1px 0 0 #a9abae,inset 0 -1px 0 #b4b6b9"></div>
<div class="a" style="left:466px;top:575px;width:45px;height:45px;background:linear-gradient(#fbfcfc 0%,#f1f2f4 35%,#dee1e4 100%);box-shadow:inset -1px 0 0 #a9abae,inset 0 -1px 0 #b4b6b9"></div>
<div class="a" style="left:512px;top:575px;width:44px;height:45px;background:linear-gradient(#fbfcfc 0%,#f1f2f4 35%,#dee1e4 100%);box-shadow:inset -1px 0 0 #a9abae,inset 0 -1px 0 #b4b6b9"></div>
<div class="a" style="left:557px;top:575px;width:90px;height:45px;background:linear-gradient(#fbfcfc 0%,#f1f2f4 35%,#dee1e4 100%);box-shadow:inset -1px 0 0 #a9abae,inset 0 -1px 0 #b4b6b9"></div>
<div class="t" style="left:558px;width:91px;text-align:center;top:589px;color:#111">Conductors</div>
<div class="a" style="left:648px;top:575px;width:45px;height:45px;background:linear-gradient(#fbfcfc 0%,#f1f2f4 35%,#dee1e4 100%);box-shadow:inset -1px 0 0 #a9abae,inset 0 -1px 0 #b4b6b9"></div>
<div class="a" style="left:694px;top:575px;width:258px;height:45px;background:linear-gradient(#fbfcfc 0%,#f1f2f4 35%,#dee1e4 100%);box-shadow:inset -1px 0 0 #a9abae,inset 0 -1px 0 #b4b6b9"></div>
<div class="t" style="left:695px;width:259px;text-align:center;top:589px;color:#111">Overcurrent Protective Device</div>
<div class="a" style="left:953px;top:575px;width:208px;height:45px;background:linear-gradient(#fbfcfc 0%,#f1f2f4 35%,#dee1e4 100%);box-shadow:inset -1px 0 0 #a9abae,inset 0 -1px 0 #b4b6b9"></div>
<div class="t" style="left:954px;width:209px;text-align:center;top:589px;color:#111">RCD</div>
<div class="a" style="left:1390px;top:575px;width:136px;height:45px;background:linear-gradient(#fbfcfc 0%,#f1f2f4 35%,#dee1e4 100%);box-shadow:inset -1px 0 0 #a9abae,inset 0 -1px 0 #b4b6b9"></div>
<div class="t" style="left:1391px;width:137px;text-align:center;top:589px;color:#111">Insulation Resistance</div>
<div class="a" style="left:1527px;top:575px;width:33px;height:45px;background:linear-gradient(#fbfcfc 0%,#f1f2f4 35%,#dee1e4 100%);box-shadow:inset -1px 0 0 #a9abae,inset 0 -1px 0 #b4b6b9"></div>
<div class="a" style="left:1561px;top:575px;width:45px;height:45px;background:linear-gradient(#fbfcfc 0%,#f1f2f4 35%,#dee1e4 100%);box-shadow:inset -1px 0 0 #a9abae,inset 0 -1px 0 #b4b6b9"></div>
<div class="a" style="left:1607px;top:575px;width:78px;height:45px;background:linear-gradient(#fbfcfc 0%,#f1f2f4 35%,#dee1e4 100%);box-shadow:inset -1px 0 0 #a9abae,inset 0 -1px 0 #b4b6b9"></div>
<div class="t" style="left:1608px;width:79px;text-align:center;top:589px;color:#111">RCD</div>
<div class="a" style="left:1686px;top:575px;width:33px;height:45px;background:linear-gradient(#fbfcfc 0%,#f1f2f4 35%,#dee1e4 100%);box-shadow:inset -1px 0 0 #a9abae,inset 0 -1px 0 #b4b6b9"></div>
<div class="a" style="left:1720px;top:575px;width:33px;height:45px;background:linear-gradient(#fbfcfc 0%,#f1f2f4 35%,#dee1e4 100%);box-shadow:inset -1px 0 0 #a9abae,inset 0 -1px 0 #b4b6b9"></div>
<div class="a" style="left:1754px;top:575px;width:32px;height:45px;background:linear-gradient(#fbfcfc 0%,#f1f2f4 35%,#dee1e4 100%);box-shadow:inset -1px 0 0 #a9abae,inset 0 -1px 0 #b4b6b9"></div>
<div class="a" style="left:1162px;top:575px;width:227px;height:22px;background:linear-gradient(#fbfcfc 0%,#f1f2f4 35%,#dee1e4 100%);box-shadow:inset -1px 0 0 #a9abae,inset 0 -1px 0 #b4b6b9"></div>
<div class="t" style="left:1163px;width:228px;text-align:center;top:578px;color:#111">Continuity (&#937;)</div>
<div class="a" style="left:1162px;top:598px;width:136px;height:22px;background:linear-gradient(#fbfcfc 0%,#f1f2f4 35%,#dee1e4 100%);box-shadow:inset -1px 0 0 #a9abae,inset 0 -1px 0 #b4b6b9"></div>
<div class="t" style="left:1163px;width:137px;text-align:center;top:601px;color:#111">Ring Final</div>
<div class="a" style="left:1299px;top:598px;width:90px;height:22px;background:linear-gradient(#fbfcfc 0%,#f1f2f4 35%,#dee1e4 100%);box-shadow:inset -1px 0 0 #a9abae,inset 0 -1px 0 #b4b6b9"></div>
<div class="t" style="left:1300px;width:91px;text-align:center;top:601px;color:#111">R1+R2 or R2</div>
<div class="a" style="left:26px;top:621px;width:17px;height:101px;background:linear-gradient(#fbfcfc 0%,#f1f2f4 35%,#dee1e4 100%);box-shadow:inset -1px 0 0 #a9abae,inset 0 -1px 0 #b4b6b9"></div>
<div class="a" style="left:44px;top:621px;width:32px;height:101px;background:linear-gradient(#fbfcfc 0%,#f1f2f4 35%,#dee1e4 100%);box-shadow:inset -1px 0 0 #a9abae,inset 0 -1px 0 #b4b6b9"></div>
<div class="vh" style="left:50.5px;top:624px;width:15px">Three Phase</div>
<div class="a" style="left:77px;top:621px;width:45px;height:101px;background:linear-gradient(#fbfcfc 0%,#f1f2f4 35%,#dee1e4 100%);box-shadow:inset -1px 0 0 #a9abae,inset 0 -1px 0 #b4b6b9"></div>
<div class="vh" style="left:83.5px;top:624px;width:15px">#</div>
<div class="a" style="left:123px;top:621px;width:296px;height:101px;background:linear-gradient(#fbfcfc 0%,#f1f2f4 35%,#dee1e4 100%);box-shadow:inset -1px 0 0 #a9abae,inset 0 -1px 0 #b4b6b9"></div>
<div class="vh" style="left:129.5px;top:624px;width:15px">Designation</div>
<div class="a" style="left:420px;top:621px;width:45px;height:101px;background:linear-gradient(#fbfcfc 0%,#f1f2f4 35%,#dee1e4 100%);box-shadow:inset -1px 0 0 #a9abae,inset 0 -1px 0 #b4b6b9"></div>
<div class="vh" style="left:426.5px;top:624px;width:15px">Wiring Type</div>
<div class="a" style="left:466px;top:621px;width:45px;height:101px;background:linear-gradient(#fbfcfc 0%,#f1f2f4 35%,#dee1e4 100%);box-shadow:inset -1px 0 0 #a9abae,inset 0 -1px 0 #b4b6b9"></div>
<div class="vh" style="left:472.5px;top:624px;width:15px">Ref Method</div>
<div class="a" style="left:512px;top:621px;width:44px;height:101px;background:linear-gradient(#fbfcfc 0%,#f1f2f4 35%,#dee1e4 100%);box-shadow:inset -1px 0 0 #a9abae,inset 0 -1px 0 #b4b6b9"></div>
<div class="vh" style="left:518.5px;top:624px;width:15px">Points</div>
<div class="a" style="left:557px;top:621px;width:45px;height:101px;background:linear-gradient(#fbfcfc 0%,#f1f2f4 35%,#dee1e4 100%);box-shadow:inset -1px 0 0 #a9abae,inset 0 -1px 0 #b4b6b9"></div>
<div class="vh" style="left:563.5px;top:624px;width:15px">Live (sq mm)</div>
<div class="a" style="left:603px;top:621px;width:44px;height:101px;background:linear-gradient(#fbfcfc 0%,#f1f2f4 35%,#dee1e4 100%);box-shadow:inset -1px 0 0 #a9abae,inset 0 -1px 0 #b4b6b9"></div>
<div class="vh" style="left:609.5px;top:624px;width:15px">CPC (sq mm)</div>
<div class="a" style="left:648px;top:621px;width:45px;height:101px;background:linear-gradient(#fbfcfc 0%,#f1f2f4 35%,#dee1e4 100%);box-shadow:inset -1px 0 0 #a9abae,inset 0 -1px 0 #b4b6b9"></div>
<div class="vh" style="left:654.5px;top:624px;width:15px">Discon (s)</div>
<div class="a" style="left:694px;top:621px;width:71px;height:101px;background:linear-gradient(#fbfcfc 0%,#f1f2f4 35%,#dee1e4 100%);box-shadow:inset -1px 0 0 #a9abae,inset 0 -1px 0 #b4b6b9"></div>
<div class="vh" style="left:700.5px;top:624px;width:15px">BS (EN)</div>
<div class="a" style="left:766px;top:621px;width:45px;height:101px;background:linear-gradient(#fbfcfc 0%,#f1f2f4 35%,#dee1e4 100%);box-shadow:inset -1px 0 0 #a9abae,inset 0 -1px 0 #b4b6b9"></div>
<div class="vh" style="left:772.5px;top:624px;width:15px">Type</div>
<div class="a" style="left:812px;top:621px;width:44px;height:101px;background:linear-gradient(#fbfcfc 0%,#f1f2f4 35%,#dee1e4 100%);box-shadow:inset -1px 0 0 #a9abae,inset 0 -1px 0 #b4b6b9"></div>
<div class="vh" style="left:818.5px;top:624px;width:15px">Rating (A)</div>
<div class="a" style="left:857px;top:621px;width:45px;height:101px;background:linear-gradient(#fbfcfc 0%,#f1f2f4 35%,#dee1e4 100%);box-shadow:inset -1px 0 0 #a9abae,inset 0 -1px 0 #b4b6b9"></div>
<div class="vh" style="left:863.5px;top:624px;width:15px">Break Cap (kA)</div>
<div class="a" style="left:903px;top:621px;width:49px;height:101px;background:linear-gradient(#fbfcfc 0%,#f1f2f4 35%,#dee1e4 100%);box-shadow:inset -1px 0 0 #a9abae,inset 0 -1px 0 #b4b6b9"></div>
<div class="vh" style="left:909.5px;top:624px;width:15px">Max Zs</div>
<div class="a" style="left:953px;top:621px;width:72px;height:101px;background:linear-gradient(#fbfcfc 0%,#f1f2f4 35%,#dee1e4 100%);box-shadow:inset -1px 0 0 #a9abae,inset 0 -1px 0 #b4b6b9"></div>
<div class="vh" style="left:959.5px;top:624px;width:15px">BS (EN)</div>
<div class="a" style="left:1026px;top:621px;width:44px;height:101px;background:linear-gradient(#fbfcfc 0%,#f1f2f4 35%,#dee1e4 100%);box-shadow:inset -1px 0 0 #a9abae,inset 0 -1px 0 #b4b6b9"></div>
<div class="vh" style="left:1032.5px;top:624px;width:15px">Type</div>
<div class="a" style="left:1071px;top:621px;width:45px;height:101px;background:linear-gradient(#fbfcfc 0%,#f1f2f4 35%,#dee1e4 100%);box-shadow:inset -1px 0 0 #a9abae,inset 0 -1px 0 #b4b6b9"></div>
<div class="vh" style="left:1077.5px;top:624px;width:15px">Idn (mA)</div>
<div class="a" style="left:1117px;top:621px;width:44px;height:101px;background:linear-gradient(#fbfcfc 0%,#f1f2f4 35%,#dee1e4 100%);box-shadow:inset -1px 0 0 #a9abae,inset 0 -1px 0 #b4b6b9"></div>
<div class="vh" style="left:1123.5px;top:624px;width:15px">Rating (A)</div>
<div class="a" style="left:1162px;top:621px;width:45px;height:101px;background:linear-gradient(#fbfcfc 0%,#f1f2f4 35%,#dee1e4 100%);box-shadow:inset -1px 0 0 #a9abae,inset 0 -1px 0 #b4b6b9"></div>
<div class="vh" style="left:1168.5px;top:624px;width:15px">r1 (line)</div>
<div class="a" style="left:1208px;top:621px;width:44px;height:101px;background:linear-gradient(#fbfcfc 0%,#f1f2f4 35%,#dee1e4 100%);box-shadow:inset -1px 0 0 #a9abae,inset 0 -1px 0 #b4b6b9"></div>
<div class="vh" style="left:1214.5px;top:624px;width:15px">rn (neutral)</div>
<div class="a" style="left:1253px;top:621px;width:45px;height:101px;background:linear-gradient(#fbfcfc 0%,#f1f2f4 35%,#dee1e4 100%);box-shadow:inset -1px 0 0 #a9abae,inset 0 -1px 0 #b4b6b9"></div>
<div class="vh" style="left:1259.5px;top:624px;width:15px">r2 (cpc)</div>
<div class="a" style="left:1299px;top:621px;width:45px;height:101px;background:linear-gradient(#fbfcfc 0%,#f1f2f4 35%,#dee1e4 100%);box-shadow:inset -1px 0 0 #a9abae,inset 0 -1px 0 #b4b6b9"></div>
<div class="vh" style="left:1305.5px;top:624px;width:15px">R1+R2</div>
<div class="a" style="left:1345px;top:621px;width:44px;height:101px;background:linear-gradient(#fbfcfc 0%,#f1f2f4 35%,#dee1e4 100%);box-shadow:inset -1px 0 0 #a9abae,inset 0 -1px 0 #b4b6b9"></div>
<div class="vh" style="left:1351.5px;top:624px;width:15px">R2</div>
<div class="a" style="left:1390px;top:621px;width:45px;height:101px;background:linear-gradient(#fbfcfc 0%,#f1f2f4 35%,#dee1e4 100%);box-shadow:inset -1px 0 0 #a9abae,inset 0 -1px 0 #b4b6b9"></div>
<div class="vh" style="left:1396.5px;top:624px;width:15px">Voltage</div>
<div class="a" style="left:1436px;top:621px;width:44px;height:101px;background:linear-gradient(#fbfcfc 0%,#f1f2f4 35%,#dee1e4 100%);box-shadow:inset -1px 0 0 #a9abae,inset 0 -1px 0 #b4b6b9"></div>
<div class="vh" style="left:1442.5px;top:624px;width:15px">Live - Live</div>
<div class="a" style="left:1481px;top:621px;width:45px;height:101px;background:linear-gradient(#fbfcfc 0%,#f1f2f4 35%,#dee1e4 100%);box-shadow:inset -1px 0 0 #a9abae,inset 0 -1px 0 #b4b6b9"></div>
<div class="vh" style="left:1487.5px;top:624px;width:15px">Live - Earth</div>
<div class="a" style="left:1527px;top:621px;width:33px;height:101px;background:linear-gradient(#fbfcfc 0%,#f1f2f4 35%,#dee1e4 100%);box-shadow:inset -1px 0 0 #a9abae,inset 0 -1px 0 #b4b6b9"></div>
<div class="vh" style="left:1533.5px;top:624px;width:15px">Polarity</div>
<div class="a" style="left:1561px;top:621px;width:45px;height:101px;background:linear-gradient(#fbfcfc 0%,#f1f2f4 35%,#dee1e4 100%);box-shadow:inset -1px 0 0 #a9abae,inset 0 -1px 0 #b4b6b9"></div>
<div class="vh" style="left:1567.5px;top:624px;width:15px">Max Meas Zs</div>
<div class="a" style="left:1607px;top:621px;width:44px;height:101px;background:linear-gradient(#fbfcfc 0%,#f1f2f4 35%,#dee1e4 100%);box-shadow:inset -1px 0 0 #a9abae,inset 0 -1px 0 #b4b6b9"></div>
<div class="vh" style="left:1613.5px;top:624px;width:15px">Discon (ms)</div>
<div class="a" style="left:1652px;top:621px;width:33px;height:101px;background:linear-gradient(#fbfcfc 0%,#f1f2f4 35%,#dee1e4 100%);box-shadow:inset -1px 0 0 #a9abae,inset 0 -1px 0 #b4b6b9"></div>
<div class="vh" style="left:1658.5px;top:624px;width:15px">Test Button</div>
<div class="a" style="left:1686px;top:621px;width:33px;height:101px;background:linear-gradient(#fbfcfc 0%,#f1f2f4 35%,#dee1e4 100%);box-shadow:inset -1px 0 0 #a9abae,inset 0 -1px 0 #b4b6b9"></div>
<div class="vh" style="left:1692.5px;top:624px;width:15px">AFDD Button</div>
<div class="a" style="left:1720px;top:621px;width:33px;height:101px;background:linear-gradient(#fbfcfc 0%,#f1f2f4 35%,#dee1e4 100%);box-shadow:inset -1px 0 0 #a9abae,inset 0 -1px 0 #b4b6b9"></div>
<div class="vh" style="left:1726.5px;top:624px;width:15px">Vulnerable</div>
<div class="a" style="left:1754px;top:621px;width:32px;height:101px;background:linear-gradient(#fbfcfc 0%,#f1f2f4 35%,#dee1e4 100%);box-shadow:inset -1px 0 0 #a9abae,inset 0 -1px 0 #b4b6b9"></div>
<div class="vh" style="left:1760.5px;top:624px;width:15px">Disregard Zs</div>
<div class="a" style="left:44px;top:723px;width:1744px;height:26px;background:#f6f6f6;border-bottom:1px solid #e3e4e6"></div>
<div class="a" style="left:25px;top:723px;width:19px;height:26px;background:#707275"></div>
<div class="a" style="left:26px;top:723px;width:16px;height:24px;background:linear-gradient(#fbfbfb,#eceded 50%,#d3d5d7)"></div>
<div class="t" style="left:78px;width:46px;text-align:center;top:726px;color:#000">1</div>
<div class="a" style="left:44px;top:749px;width:1744px;height:26px;background:#fdfdfc;border-bottom:1px solid #e3e4e6"></div>
<div class="a" style="left:25px;top:749px;width:19px;height:26px;background:#707275"></div>
<div class="a" style="left:26px;top:749px;width:16px;height:24px;background:linear-gradient(#fbfbfb,#eceded 50%,#d3d5d7)"></div>
<div class="t" style="left:78px;width:46px;text-align:center;top:752px;color:#000">2</div>
<div class="a" style="left:44px;top:775px;width:1744px;height:26px;background:#f6f6f6;border-bottom:1px solid #e3e4e6"></div>
<div class="a" style="left:25px;top:775px;width:19px;height:26px;background:#707275"></div>
<div class="a" style="left:26px;top:775px;width:16px;height:24px;background:linear-gradient(#fbfbfb,#eceded 50%,#d3d5d7)"></div>
<div class="t" style="left:78px;width:46px;text-align:center;top:778px;color:#000">3</div>
<div class="a" style="left:44px;top:801px;width:1744px;height:26px;background:#fdfdfc;border-bottom:1px solid #e3e4e6"></div>
<div class="a" style="left:25px;top:801px;width:19px;height:26px;background:#707275"></div>
<div class="a" style="left:26px;top:801px;width:16px;height:24px;background:linear-gradient(#fbfbfb,#eceded 50%,#d3d5d7)"></div>
<div class="t" style="left:78px;width:46px;text-align:center;top:804px;color:#000">4</div>
<div class="a" style="left:44px;top:827px;width:1744px;height:27px;background:#f6f6f6;border-bottom:1px solid #e3e4e6"></div>
<div class="a" style="left:25px;top:827px;width:19px;height:27px;background:#707275"></div>
<div class="a" style="left:26px;top:827px;width:16px;height:25px;background:linear-gradient(#fbfbfb,#eceded 50%,#d3d5d7)"></div>
<div class="t" style="left:78px;width:46px;text-align:center;top:830px;color:#000">5</div>
<div class="a" style="left:44px;top:854px;width:1744px;height:26px;background:#fdfdfc;border-bottom:1px solid #e3e4e6"></div>
<div class="a" style="left:25px;top:854px;width:19px;height:26px;background:#707275"></div>
<div class="a" style="left:26px;top:854px;width:16px;height:24px;background:linear-gradient(#fbfbfb,#eceded 50%,#d3d5d7)"></div>
<div class="t" style="left:78px;width:46px;text-align:center;top:857px;color:#000">6</div>
<div class="a" style="left:44px;top:880px;width:1744px;height:26px;background:#f6f6f6;border-bottom:1px solid #e3e4e6"></div>
<div class="a" style="left:25px;top:880px;width:19px;height:26px;background:#707275"></div>
<div class="a" style="left:26px;top:880px;width:16px;height:24px;background:linear-gradient(#fbfbfb,#eceded 50%,#d3d5d7)"></div>
<div class="t" style="left:78px;width:46px;text-align:center;top:883px;color:#000">7</div>
<div class="a" style="left:44px;top:906px;width:1744px;height:26px;background:#fdfdfc;border-bottom:1px solid #e3e4e6"></div>
<div class="a" style="left:25px;top:906px;width:19px;height:26px;background:#707275"></div>
<div class="a" style="left:26px;top:906px;width:16px;height:24px;background:linear-gradient(#fbfbfb,#eceded 50%,#d3d5d7)"></div>
<div class="t" style="left:78px;width:46px;text-align:center;top:909px;color:#000">8</div>
<div class="a" style="left:44px;top:932px;width:1744px;height:26px;background:#f6f6f6;border-bottom:1px solid #e3e4e6"></div>
<div class="a" style="left:25px;top:932px;width:19px;height:26px;background:#707275"></div>
<div class="a" style="left:26px;top:932px;width:16px;height:24px;background:linear-gradient(#fbfbfb,#eceded 50%,#d3d5d7)"></div>
<div class="t" style="left:78px;width:46px;text-align:center;top:935px;color:#000">9</div>
<div class="a" style="left:43px;top:722px;width:1px;height:236px;background:#e3e4e6"></div>
<div class="a" style="left:76px;top:722px;width:1px;height:236px;background:#e3e4e6"></div>
<div class="a" style="left:122px;top:722px;width:1px;height:236px;background:#e3e4e6"></div>
<div class="a" style="left:419px;top:722px;width:1px;height:236px;background:#e3e4e6"></div>
<div class="a" style="left:465px;top:722px;width:1px;height:236px;background:#e3e4e6"></div>
<div class="a" style="left:511px;top:722px;width:1px;height:236px;background:#e3e4e6"></div>
<div class="a" style="left:556px;top:722px;width:1px;height:236px;background:#e3e4e6"></div>
<div class="a" style="left:602px;top:722px;width:1px;height:236px;background:#e3e4e6"></div>
<div class="a" style="left:647px;top:722px;width:1px;height:236px;background:#e3e4e6"></div>
<div class="a" style="left:693px;top:722px;width:1px;height:236px;background:#e3e4e6"></div>
<div class="a" style="left:765px;top:722px;width:1px;height:236px;background:#e3e4e6"></div>
<div class="a" style="left:811px;top:722px;width:1px;height:236px;background:#e3e4e6"></div>
<div class="a" style="left:856px;top:722px;width:1px;height:236px;background:#e3e4e6"></div>
<div class="a" style="left:902px;top:722px;width:1px;height:236px;background:#e3e4e6"></div>
<div class="a" style="left:952px;top:722px;width:1px;height:236px;background:#e3e4e6"></div>
<div class="a" style="left:1025px;top:722px;width:1px;height:236px;background:#e3e4e6"></div>
<div class="a" style="left:1070px;top:722px;width:1px;height:236px;background:#e3e4e6"></div>
<div class="a" style="left:1116px;top:722px;width:1px;height:236px;background:#e3e4e6"></div>
<div class="a" style="left:1161px;top:722px;width:1px;height:236px;background:#e3e4e6"></div>
<div class="a" style="left:1207px;top:722px;width:1px;height:236px;background:#e3e4e6"></div>
<div class="a" style="left:1252px;top:722px;width:1px;height:236px;background:#e3e4e6"></div>
<div class="a" style="left:1298px;top:722px;width:1px;height:236px;background:#e3e4e6"></div>
<div class="a" style="left:1344px;top:722px;width:1px;height:236px;background:#e3e4e6"></div>
<div class="a" style="left:1389px;top:722px;width:1px;height:236px;background:#e3e4e6"></div>
<div class="a" style="left:1435px;top:722px;width:1px;height:236px;background:#e3e4e6"></div>
<div class="a" style="left:1480px;top:722px;width:1px;height:236px;background:#e3e4e6"></div>
<div class="a" style="left:1526px;top:722px;width:1px;height:236px;background:#e3e4e6"></div>
<div class="a" style="left:1560px;top:722px;width:1px;height:236px;background:#e3e4e6"></div>
<div class="a" style="left:1606px;top:722px;width:1px;height:236px;background:#e3e4e6"></div>
<div class="a" style="left:1651px;top:722px;width:1px;height:236px;background:#e3e4e6"></div>
<div class="a" style="left:1685px;top:722px;width:1px;height:236px;background:#e3e4e6"></div>
<div class="a" style="left:1719px;top:722px;width:1px;height:236px;background:#e3e4e6"></div>
<div class="a" style="left:1753px;top:722px;width:1px;height:236px;background:#e3e4e6"></div>
<div class="a" style="left:1786px;top:722px;width:1px;height:236px;background:#e3e4e6"></div>
<div class="t" style="left:466px;width:46px;text-align:center;top:727px;color:#000">A</div>
<div class="t" style="left:557px;width:46px;text-align:center;top:727px;color:#000">2.5</div>
<div class="t" style="left:603px;width:45px;text-align:center;top:727px;color:#000">1.5</div>
<div class="t" style="left:694px;width:72px;text-align:center;top:727px;color:#000">61009</div>
<div class="t" style="left:766px;width:46px;text-align:center;top:727px;color:#000">B</div>
<div class="t" style="left:812px;width:45px;text-align:center;top:727px;color:#000">32</div>
<div class="t" style="left:29px;top:727px;color:#8a8a8a;font-family:'Liberation Serif';font-size:14px">I</div>
<div class="a" style="left:447px;top:726px;width:16px;height:20px;background:linear-gradient(#fdf3c8,#f6d98a);border:1px solid #e8c878"></div>
<div class="dd" style="left:451px;top:735px;border-width:4px 4px 0 4px"></div>
<svg class="a" style="left:451px;top:737px" width="12" height="20" viewBox="0 0 12 20"><path d="M1 1V15L4.5 11.5L7 17L9 16L6.5 10.5H11Z" fill="#fff" stroke="#111" stroke-width="1"/></svg>
<div class="a" style="left:2px;top:1042px;width:1811px;height:1px;background:#5a5c60"></div>
<div class="a" style="left:2px;top:1043px;width:1811px;height:31px;background:linear-gradient(#48494e,#45464b 35%,#39393c 38%,#37383a);border-radius:0 0 0 4px"></div>
<div class="a" style="left:0;top:1074px;width:1816px;height:2px;background:#e8e8e8"></div>
<div class="a" style="left:35px;top:1044px;width:1px;height:28px;background:#6a6a6a"></div>
<div class="a" style="left:51px;top:1044px;width:1px;height:28px;background:#6a6a6a"></div>
<svg class="a" style="left:1790px;top:1054px" width="14" height="14" viewBox="0 0 14 14"><rect x="10" y="2" width="2" height="2" fill="#ddd"/><rect x="6" y="6" width="2" height="2" fill="#ddd"/><rect x="10" y="6" width="2" height="2" fill="#ddd"/><rect x="2" y="10" width="2" height="2" fill="#ddd"/><rect x="6" y="10" width="2" height="2" fill="#ddd"/><rect x="10" y="10" width="2" height="2" fill="#ddd"/></svg></body></html>
